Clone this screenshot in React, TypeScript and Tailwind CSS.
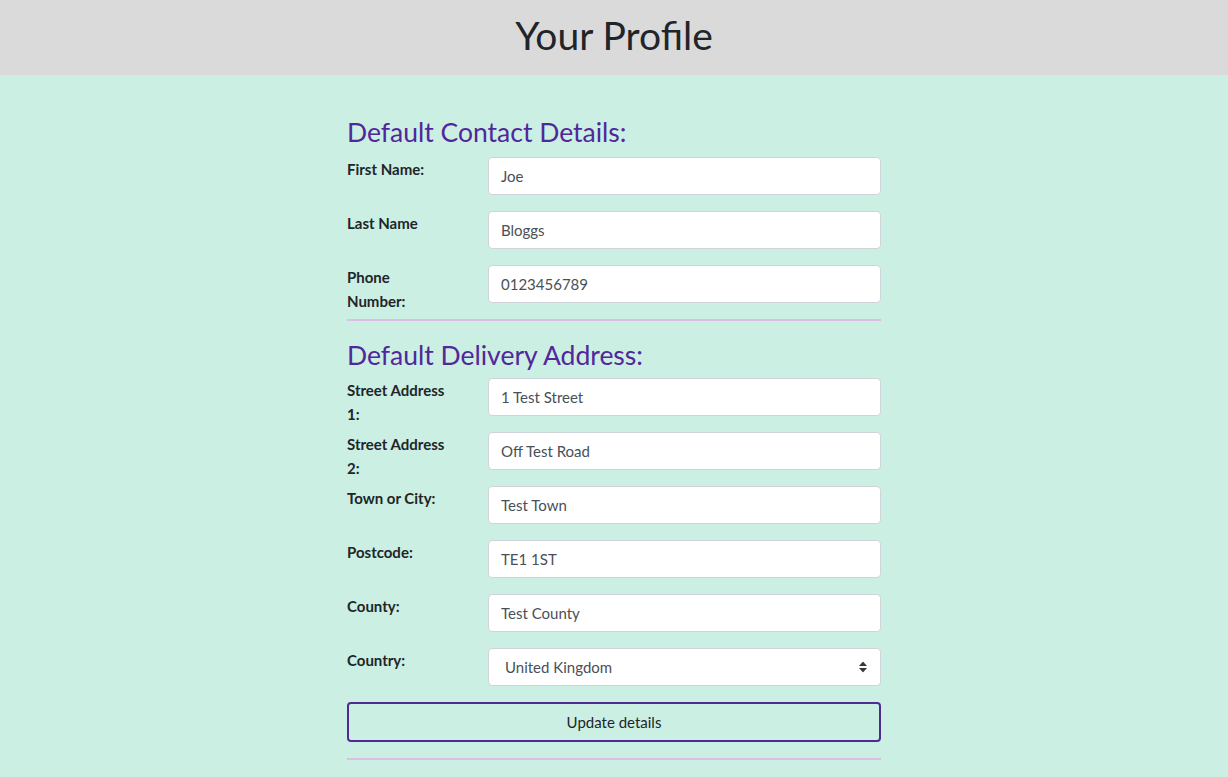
import React from "react";

type Field = {
  id: string;
  label: React.ReactNode;
  value: string;
};

const contactFields: Field[] = [
  { id: "first_name", label: "First Name:", value: "Joe" },
  { id: "last_name", label: "Last Name", value: "Bloggs" },
  {
    id: "phone",
    label: (
      <>
        Phone
        <br />
        Number:
      </>
    ),
    value: "0123456789",
  },
];

const addressFields: Field[] = [
  {
    id: "street1",
    label: (
      <>
        Street Address
        <br />
        1:
      </>
    ),
    value: "1 Test Street",
  },
  {
    id: "street2",
    label: (
      <>
        Street Address
        <br />
        2:
      </>
    ),
    value: "Off Test Road",
  },
  { id: "town", label: "Town or City:", value: "Test Town" },
  { id: "postcode", label: "Postcode:", value: "TE1 1ST" },
  { id: "county", label: "County:", value: "Test County" },
];

const FormRow = ({
  id,
  label,
  children,
}: {
  id: string;
  label: React.ReactNode;
  children: React.ReactNode;
}) => {
  return (
    <div className="flex h-[38px] mb-4">
      <label
        htmlFor={id}
        className="w-[141px] shrink-0 text-[15px] leading-6 font-bold text-[#212529]"
      >
        {label}
      </label>
      <div className="flex-1">{children}</div>
    </div>
  );
};

const TextInput = ({ id, value }: { id: string; value: string }) => (
  <input
    id={id}
    defaultValue={value}
    className="w-full h-[38px] bg-white border border-[#ced4da] rounded px-3 text-[15px] text-[#495057] outline-none"
  />
);

export default function App() {
  return (
    <div
      className="min-h-screen bg-[#cbefe3]"
      style={{ fontFamily: "Lato, 'Open Sans', sans-serif" }}
    >
      <header className="h-[75px] bg-[#dadada] flex items-center justify-center">
        <h1 className="text-[39px] text-[#212529] font-normal -mt-1">Your Profile</h1>
      </header>

      <main className="w-[534px] mx-auto pt-[40px]">
        <h2 className="text-[26.5px] leading-[34px] text-[#51279b] mb-[8px]">
          Default Contact Details:
        </h2>
        {contactFields.map((f) => (
          <FormRow key={f.id} id={f.id} label={f.label}>
            <TextInput id={f.id} value={f.value} />
          </FormRow>
        ))}

        <hr className="border-0 h-[2px] bg-[#dcbde3]" />

        <h2 className="text-[26.5px] leading-[34px] text-[#51279b] mt-[17px] mb-[6px]">
          Default Delivery Address:
        </h2>
        {addressFields.map((f) => (
          <FormRow key={f.id} id={f.id} label={f.label}>
            <TextInput id={f.id} value={f.value} />
          </FormRow>
        ))}

        <FormRow id="country" label="Country:">
          <div className="relative h-[38px] bg-white border border-[#ced4da] rounded flex items-center pl-4 text-[15px] text-[#495057]">
            United Kingdom
            <svg
              className="absolute right-[13px] top-1/2 -translate-y-1/2"
              width="8"
              height="11"
              viewBox="0 0 8 11"
            >
              <path d="M4 0 L8 4.5 H0 Z" fill="#343a40" />
              <path d="M4 11 L8 6.5 H0 Z" fill="#343a40" />
            </svg>
          </div>
        </FormRow>

        <button className="w-full h-10 border-2 border-[#4f2a93] rounded text-[15px] text-[#212529] bg-transparent">
          Update details
        </button>

        <hr className="border-0 h-[2px] bg-[#dcbde3] mt-4" />
      </main>
    </div>
  );
}
